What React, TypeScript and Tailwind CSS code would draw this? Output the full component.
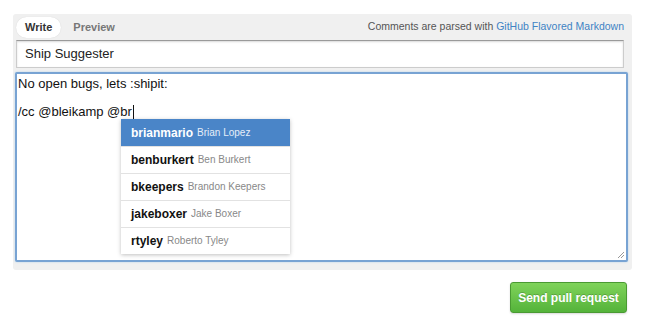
import React from "react";

const users = [
  { login: "brianmario", name: "Brian Lopez" },
  { login: "benburkert", name: "Ben Burkert" },
  { login: "bkeepers", name: "Brandon Keepers" },
  { login: "jakeboxer", name: "Jake Boxer" },
  { login: "rtyley", name: "Roberto Tyley" },
];

export default function App() {
  return (
    <div className="w-[650px] h-[327px] bg-white pl-[13px] pt-[14px] font-['Liberation_Sans',Arial,sans-serif] text-[#333]">
      {/* Comment box */}
      <div className="w-[619px] h-[256px] rounded-[3px] bg-[#f0f0f0] pl-[3px] pr-[5px]">
        <div className="flex h-[26px] items-center justify-between pr-[3px]">
          <div className="flex items-center gap-[12px] pt-[1px]">
            <span className="rounded-full bg-white px-[9px] py-[2px] text-[11px] font-bold text-[#333] shadow-[0_0_1px_rgba(0,0,0,0.15)]">
              Write
            </span>
            <span className="text-[11px] font-bold text-[#777]">Preview</span>
          </div>
          <span className="text-[10.5px] text-[#555]">
            Comments are parsed with{" "}
            <span className="text-[#4183c4]">GitHub Flavored Markdown</span>
          </span>
        </div>

        <div className="flex h-[28px] w-[608px] items-center border border-[#ccc] border-t-[#9a9a9a] bg-white pl-[8px] text-[13px] text-[#222] shadow-[inset_0_1px_2px_rgba(0,0,0,0.15)]">
          Ship Suggester
        </div>

        <div className="relative mt-[4px] -ml-px h-[190px] w-[613px] rounded-[2px] border-2 border-[#78a3d3] bg-white px-[1px] pt-[3px] text-[13px] leading-[14px] text-[#111] shadow-[0_0_2px_rgba(81,167,232,0.4)]">
          <div>No open bugs, lets :shipit:</div>
          <div>&nbsp;</div>
          <div className="flex items-center">
            /cc @bleikamp @br
            <span className="ml-px inline-block h-[14px] w-px bg-[#111]" />
          </div>

          {/* Mention suggestions */}
          <ul className="absolute left-[104px] top-[45px] w-[169px] bg-white shadow-[0_1px_4px_rgba(0,0,0,0.25)]">
            {users.map((u, i) => (
              <li
                key={u.login}
                className={
                  i === 0
                    ? "flex h-[27px] items-center gap-[4px] bg-[#4a85c8] pl-[10px] text-white"
                    : "flex h-[27px] items-center gap-[4px] border-t border-[#e2e2e2] pl-[10px]"
                }
              >
                <span className="text-[12px] font-bold">{u.login}</span>
                <span className={i === 0 ? "text-[10px] text-[#e6eef8]" : "text-[10px] text-[#888]"}>
                  {u.name}
                </span>
              </li>
            ))}
          </ul>

          {/* resize grip */}
          <svg className="absolute bottom-[1px] right-[1px]" width="8" height="8" viewBox="0 0 8 8">
            <path d="M7 1L1 7M7 4L4 7" stroke="#999" strokeWidth="1" />
          </svg>
        </div>
      </div>

      <div className="flex w-[614px] justify-end pt-[12px]">
        <button className="h-[31px] w-[117px] rounded-[3px] border border-[#4a9a33] bg-gradient-to-b from-[#7fd35a] to-[#54b33a] text-[12px] font-bold text-white shadow-[0_1px_2px_rgba(0,0,0,0.15)] [text-shadow:0_-1px_0_rgba(0,0,0,0.2)]">
          Send pull request
        </button>
      </div>
    </div>
  );
}
